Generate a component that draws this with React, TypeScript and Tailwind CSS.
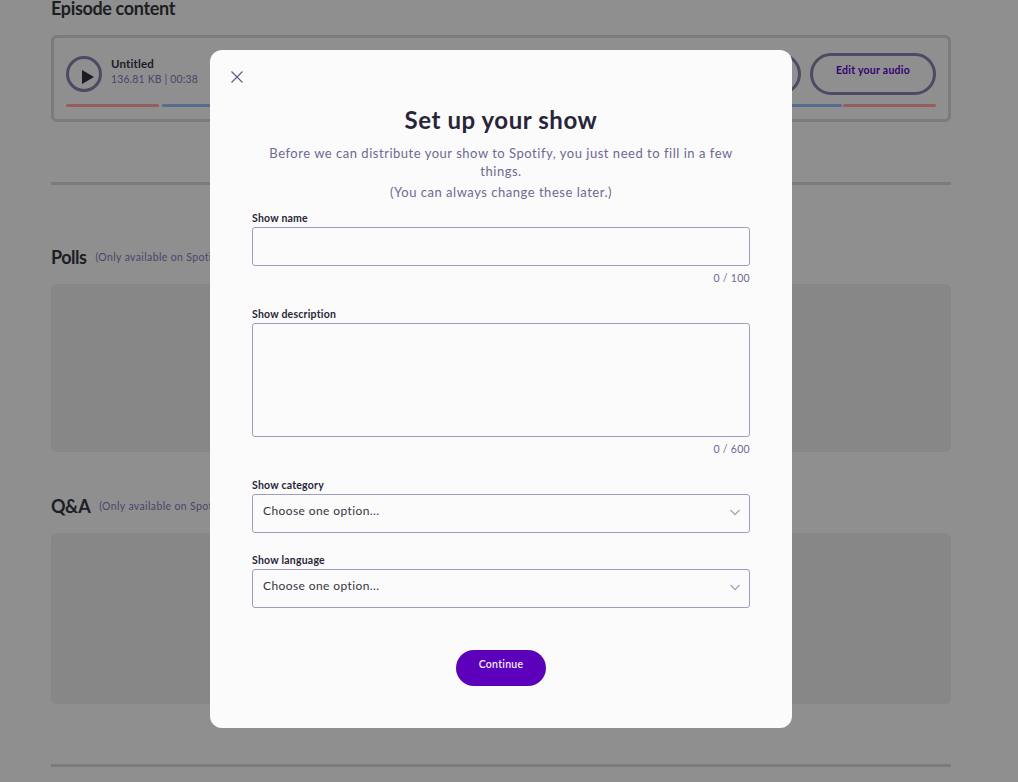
import type { ReactNode } from "react";

function SectionHeading({ title, note }: { title: string; note: string }) {
  return (
    <div className="flex h-6 items-center whitespace-nowrap">
      <h2 className="-mt-px text-[18px] font-bold leading-6 tracking-[-0.5px] text-[#1c1e24]">{title}</h2>
      <span className="ml-[9px] text-[10.5px] leading-4 tracking-[0.36px] text-[#4b4568]">{note}</span>
    </div>
  );
}

function Field({ label, children }: { label: string; children: ReactNode }) {
  return (
    <div>
      <div className="h-[18px] text-[10.5px] font-bold leading-[18px] tracking-[0.22px] text-[#292538]">{label}</div>
      {children}
    </div>
  );
}

function Counter({ max }: { max: number }) {
  return (
    <div className="mt-[3px] h-[18px] text-right text-[10.5px] leading-[18px] tracking-[0.3px] text-[#6f6891]">
      0 / {max}
    </div>
  );
}

function Select() {
  return (
    <button className="flex h-[39px] w-full items-center justify-between rounded-[3px] border border-[#a29bbd] pl-[10px] pr-[9px] text-left">
      <span className="-mt-[5px] text-[12px] tracking-[0.4px] text-[#38343f]">Choose one option...</span>
      <svg className="-mt-[3px]" width="10" height="7" viewBox="0 0 10 7" fill="none" stroke="#a29bbd" strokeWidth="1.1">
        <path d="M0.5 1L5 5.7L9.5 1" />
      </svg>
    </button>
  );
}

function EpisodeCard() {
  return (
    <div className="mt-[19px] h-[87px] rounded-[6px] border-[3px] border-[#7b7b7b] px-3 pt-[15px]">
      <div className="flex h-[42px] items-center">
        <div className="flex size-9 items-center justify-center rounded-full border-[3px] border-[#4e4964]">
          <svg className="ml-[7px] mt-[5px]" width="12" height="14" viewBox="0 0 12 14" fill="#1c1a25">
            <path d="M0 0L12 7L0 14Z" />
          </svg>
        </div>
        <div className="ml-[9px] -mt-[6px]">
          <div className="text-[11.5px] font-bold leading-[15px] tracking-[0.15px] text-[#1c1a25]">Untitled</div>
          <div className="text-[10.5px] leading-[16px] tracking-[0.15px] text-[#4b4568]">136.81 KB | 00:38</div>
        </div>
        <div className="ml-auto h-[42px] w-[126px] rounded-full border-[3px] border-[#4e4964]" />
        <button className="ml-[9px] h-[42px] w-[126px] rounded-full border-[3px] border-[#4e4964] pb-[6px] text-[10.5px] font-bold tracking-[0.26px] text-[#350071]">
          Edit your audio
        </button>
      </div>
      <div className="mt-[9px] flex h-[3px]">
        <div className="w-[93px] rounded-full bg-[#965d5f]" />
        <div className="ml-[3px] mr-px flex-1 rounded-full bg-[#566d91]" />
        <div className="w-[93px] rounded-full bg-[#965d5f]" />
      </div>
    </div>
  );
}

function ShowModal() {
  return (
    <div className="absolute left-[210px] top-[50px] h-[678px] w-[582px] rounded-xl bg-[#fbfbfb] px-[42px]">
      <button className="absolute left-[21px] top-[21px]" aria-label="Close">
        <svg width="12" height="12" viewBox="0 0 12 12" stroke="#625a88" strokeWidth="1.2">
          <path d="M0.5 0.5L11.5 11.5M11.5 0.5L0.5 11.5" />
        </svg>
      </button>
      <h1 className="pt-[54px] text-center text-[24px] font-bold leading-8 tracking-[0.56px] text-[#292538]">
        Set up your show
      </h1>
      <div className="mt-2 text-center text-[13px] leading-[18px] tracking-[0.52px] text-[#6f6891]">
        <p>
          Before we can distribute your show to Spotify, you just need to fill in a few
          <br />
          things.
        </p>
        <p className="mt-[3px]">(You can always change these later.)</p>
      </div>
      <div className="mt-2">
        <Field label="Show name">
          <div className="h-[39px] rounded-[3px] border border-[#a29bbd]" />
          <Counter max={100} />
        </Field>
      </div>
      <div className="mt-[18px]">
        <Field label="Show description">
          <div className="h-[114px] rounded-[3px] border border-[#a29bbd]" />
          <Counter max={600} />
        </Field>
      </div>
      <div className="mt-[18px]">
        <Field label="Show category">
          <Select />
        </Field>
      </div>
      <div className="mt-[18px]">
        <Field label="Show language">
          <Select />
        </Field>
      </div>
      <button className="mx-auto mt-[42px] block h-9 w-[90px] rounded-full bg-[#5c00bb] pb-[6px] text-[10.5px] font-semibold tracking-[0.26px] text-[#f5edfc]">
        Continue
      </button>
    </div>
  );
}

export default function App() {
  return (
    <div className="relative h-[782px] w-[1018px] overflow-hidden bg-[#8f8f8f] font-['Lato',sans-serif]">
      <div className="ml-[51px] w-[900px]">
        <h2 className="h-4 text-[18px] font-bold leading-4 tracking-[-0.35px] text-[#1c1e24]">Episode content</h2>
        <EpisodeCard />
        <div className="mt-[60px] h-[3px] bg-[#7b7b7b]" />
        <div className="mt-[60px]">
          <SectionHeading title="Polls" note="(Only available on Spotify)" />
          <div className="mt-[15px] h-[168px] rounded-[6px] bg-[#878787]" />
        </div>
        <div className="mt-[42px]">
          <SectionHeading title="Q&A" note="(Only available on Spotify)" />
          <div className="mt-[15px] h-[171px] rounded-[6px] bg-[#878787]" />
        </div>
        <div className="mt-[60px] h-[3px] bg-[#7b7b7b]" />
      </div>
      <ShowModal />
    </div>
  );
}
